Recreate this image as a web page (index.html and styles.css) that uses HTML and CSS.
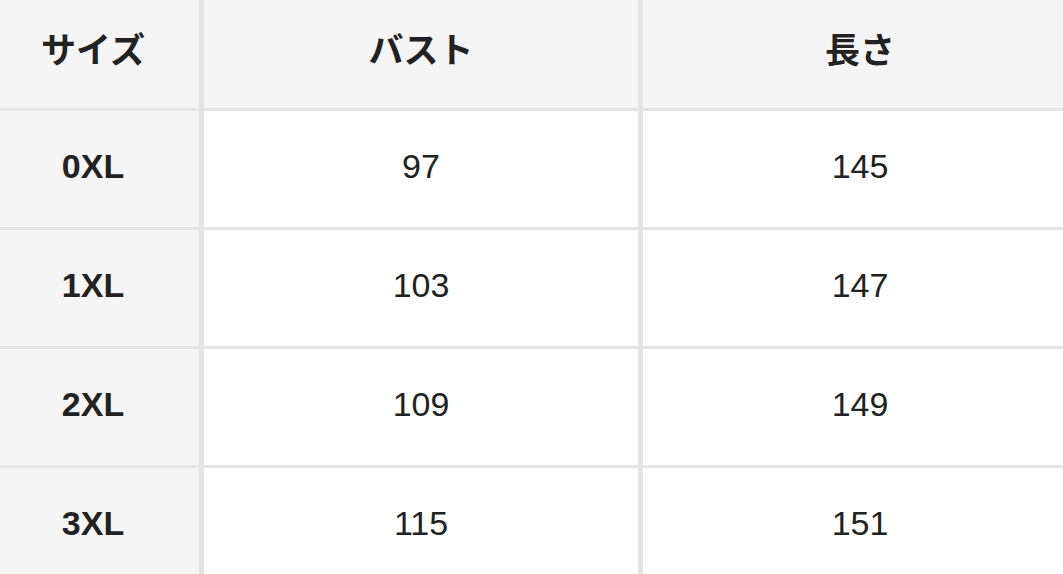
FILE: index.html
```html
<!DOCTYPE html>
<html lang="ja">
<head>
<meta charset="utf-8">
<link rel="stylesheet" href="styles.css">
</head>
<body>
<div class="table">
  <div class="cell head c1">サイズ</div>
  <div class="cell head c2">バスト</div>
  <div class="cell head c3">長さ</div>

  <div class="cell label c1">0XL</div>
  <div class="cell c2">97</div>
  <div class="cell c3">145</div>

  <div class="cell label c1">1XL</div>
  <div class="cell c2">103</div>
  <div class="cell c3">147</div>

  <div class="cell label c1">2XL</div>
  <div class="cell c2">109</div>
  <div class="cell c3">149</div>

  <div class="cell label c1">3XL</div>
  <div class="cell c2">115</div>
  <div class="cell c3">151</div>
</div>
</body>
</html>
```

FILE: styles.css
```css
html, body {
  margin: 0;
  padding: 0;
  width: 1063px;
  height: 574px;
  overflow: hidden;
  background: #ffffff;
}

.table {
  display: grid;
  grid-template-columns: 199px 434px 420px;
  grid-template-rows: 108px repeat(4, 116px);
  column-gap: 5px;
  row-gap: 3px;
  background: #e4e4e4;
  font-family: "Liberation Sans", "Noto Sans CJK JP", sans-serif;
  color: #222222;
  font-size: 34px;
}

.cell {
  display: flex;
  align-items: center;
  justify-content: center;
  background: #ffffff;
  padding-bottom: 5px;
}

.head {
  background: #f5f5f5;
  font-weight: bold;
  font-size: 35px;
  padding-bottom: 13px;
}

.label {
  background: #f5f5f5;
  font-weight: bold;
}

.c1 {
  padding-right: 13px;
}

.c3 {
  padding-left: 14px;
}
```
